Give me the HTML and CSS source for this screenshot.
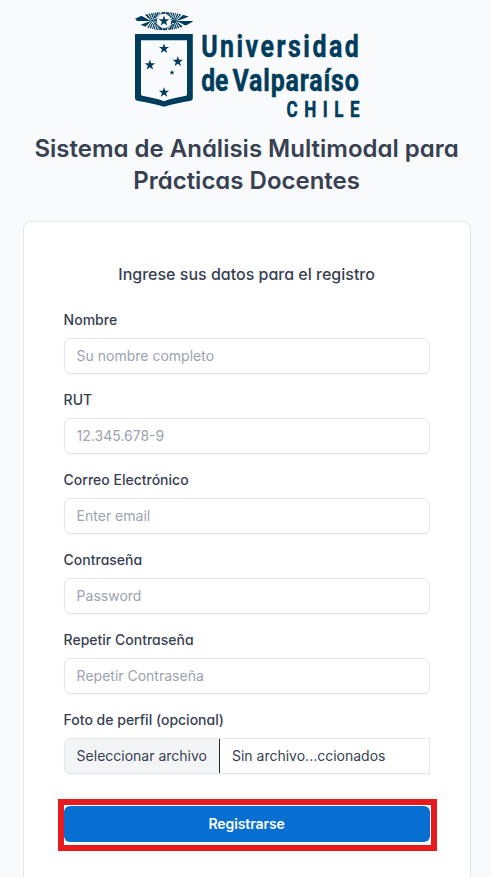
FILE: index.html
```html
<!DOCTYPE html>
<html lang="es">
<head>
<meta charset="utf-8">
<title>Registro</title>
<link rel="stylesheet" href="styles.css">
</head>
<body>
<main class="page">
  <svg class="logo" viewBox="134 11 226 112" role="img" aria-label="Universidad de Valparaíso, Chile">
    <defs>
      <path id="star" d="M0-5.6 1.3-1.8 5.3-1.7 2.1.7 3.3 4.5 0 2.2-3.3 4.5-2.1.7-5.3-1.7-1.3-1.8Z"/>
      <clipPath id="oval"><path d="M135 18.8Q148 12 164 12T193 18.8L191 20.2L193 21.5Q180 30.2 164 30.2T135 21.5L137 20.2Z"/></clipPath>
    </defs>
    <g clip-path="url(#oval)">
      <ellipse class="rays" cx="164" cy="21" rx="14.7" ry="4.7" pathLength="108"/>
      <circle class="disc" cx="164" cy="21" r="7.2"/>
    </g>
    <use href="#star" transform="translate(164 21)"/>
    <path fill-rule="evenodd" d="M135 34H192.8V98.2Q192.8 100 191 100.7Q176 103 164 106.8Q152 103 137 100.7Q135 100 135 98.2ZM141 40.2V94.2Q141 95.4 142.3 95.8Q155 98 164 101.2Q173 98 186 95.8Q187 95.4 187 94.2V40.2Z"/>
    <use href="#star" transform="translate(164 48.7) scale(.95)"/>
    <use href="#star" transform="translate(149.9 65) scale(.98)"/>
    <use href="#star" transform="translate(177.8 61.5) scale(.98)"/>
    <use href="#star" transform="translate(172 72.6) scale(.5)"/>
    <use href="#star" transform="translate(164 92.4) scale(.98)"/>
    <text class="word" transform="translate(201.2 57.1) scale(.78 1)" font-size="32" textLength="202">Universidad</text>
    <text class="word" transform="translate(201.2 91) scale(.77 1)" font-size="32">de</text>
    <text class="word" transform="translate(232.5 91) scale(.78 1)" font-size="32" textLength="162">Valparaíso</text>
    <text class="word" transform="translate(286.6 116.6) scale(.78 1)" font-size="21.8" textLength="93.5">CHILE</text>
  </svg>
  <h1 class="title">Sistema de Análisis Multimodal para Prácticas Docentes</h1>
  <form class="card">
    <h2 class="subtitle">Ingrese sus datos para el registro</h2>
    <div class="field"><label for="name">Nombre</label><input id="name" type="text" placeholder="Su nombre completo"></div>
    <div class="field"><label for="rut">RUT</label><input id="rut" type="text" placeholder="12.345.678-9"></div>
    <div class="field"><label for="email">Correo Electrónico</label><input id="email" type="email" placeholder="Enter email"></div>
    <div class="field"><label for="pass">Contraseña</label><input id="pass" type="password" placeholder="Password"></div>
    <div class="field"><label for="pass2">Repetir Contraseña</label><input id="pass2" type="password" placeholder="Repetir Contraseña"></div>
    <div class="field"><label>Foto de perfil (opcional)</label>
      <div class="file"><span class="file-button">Seleccionar archivo</span><span class="file-name">Sin archivo...ccionados</span></div>
    </div>
    <div class="highlight"><button type="button" class="submit">Registrarse</button></div>
  </form>
</main>
</body>
</html>
```
FILE: styles.css
```css
* { box-sizing: border-box; }
body {
  margin: 0;
  height: 877px;
  overflow: hidden;
  background: #f9fafc;
  color: #374151;
  font-family: Inter, "Liberation Sans", sans-serif;
}
.page {
  width: 448px;
  margin-left: 22.6px;
  padding-top: 11px;
  display: flex;
  flex-direction: column;
  align-items: center;
}
.logo { display: block; width: 226px; height: 112px; fill: #003c5b; }
.rays { fill: none; stroke: #003c5b; stroke-width: 30; stroke-dasharray: 1.6 1.1; }
.disc { fill: #f9fafc; }
.word {
  font-family: Roboto, "Liberation Sans", sans-serif;
  font-weight: 700;
  stroke: #003c5b;
  stroke-width: .5;
}
.title {
  margin: 10px 0 24px;
  font-size: 24px;
  line-height: 32px;
  font-weight: 600;
  text-align: center;
  font-feature-settings: "cv11";
}
.card {
  width: 448px;
  height: 656px;
  padding: 40px 40px 0;
  border: 1px solid #e5e7eb;
  border-bottom: 0;
  border-radius: 8px 8px 0 0;
  background: #fff;
}
.subtitle {
  margin: 0 0 24px;
  font-size: 16px;
  line-height: 24px;
  font-weight: 500;
  text-align: center;
  font-feature-settings: "cv11";
}
.field { display: flex; flex-direction: column; gap: 8px; margin-bottom: 16px; }
.field label {
  font-size: 14px;
  line-height: 20px;
  font-weight: 500;
  font-feature-settings: "cv11";
}
.field input, .file {
  width: 100%;
  height: 36px;
  border: 1px solid #e5e7eb;
  border-radius: 6px;
  background: #fff;
  box-shadow: 0 1px 2px rgba(0, 0, 0, .05);
  font: 400 14px/20px Inter, "Liberation Sans", sans-serif;
}
.field input { padding: 0 12px 2px; }
.field input::placeholder { color: #9ca3af; opacity: 1; }
.file { display: flex; border-radius: 6px 0 0 6px; }
.file-button {
  padding: 7px 12px;
  border-right: 1px solid #1f2937;
  border-radius: 5px 0 0 5px;
  background: #f3f4f6;
}
.file-name { padding: 7px 12px; }
.highlight {
  margin: 25px -7px 0 -6px;
  padding: 1px 1px 3px 0;
  border: 6px solid #e71b1d;
}
.submit {
  display: block;
  width: 100%;
  height: 36px;
  padding: 0;
  border: 0;
  border-radius: 6px;
  background: #066fd1;
  color: #fff;
  font: 600 14px/20px Inter, "Liberation Sans", sans-serif;
  letter-spacing: -.1px;
}
```
